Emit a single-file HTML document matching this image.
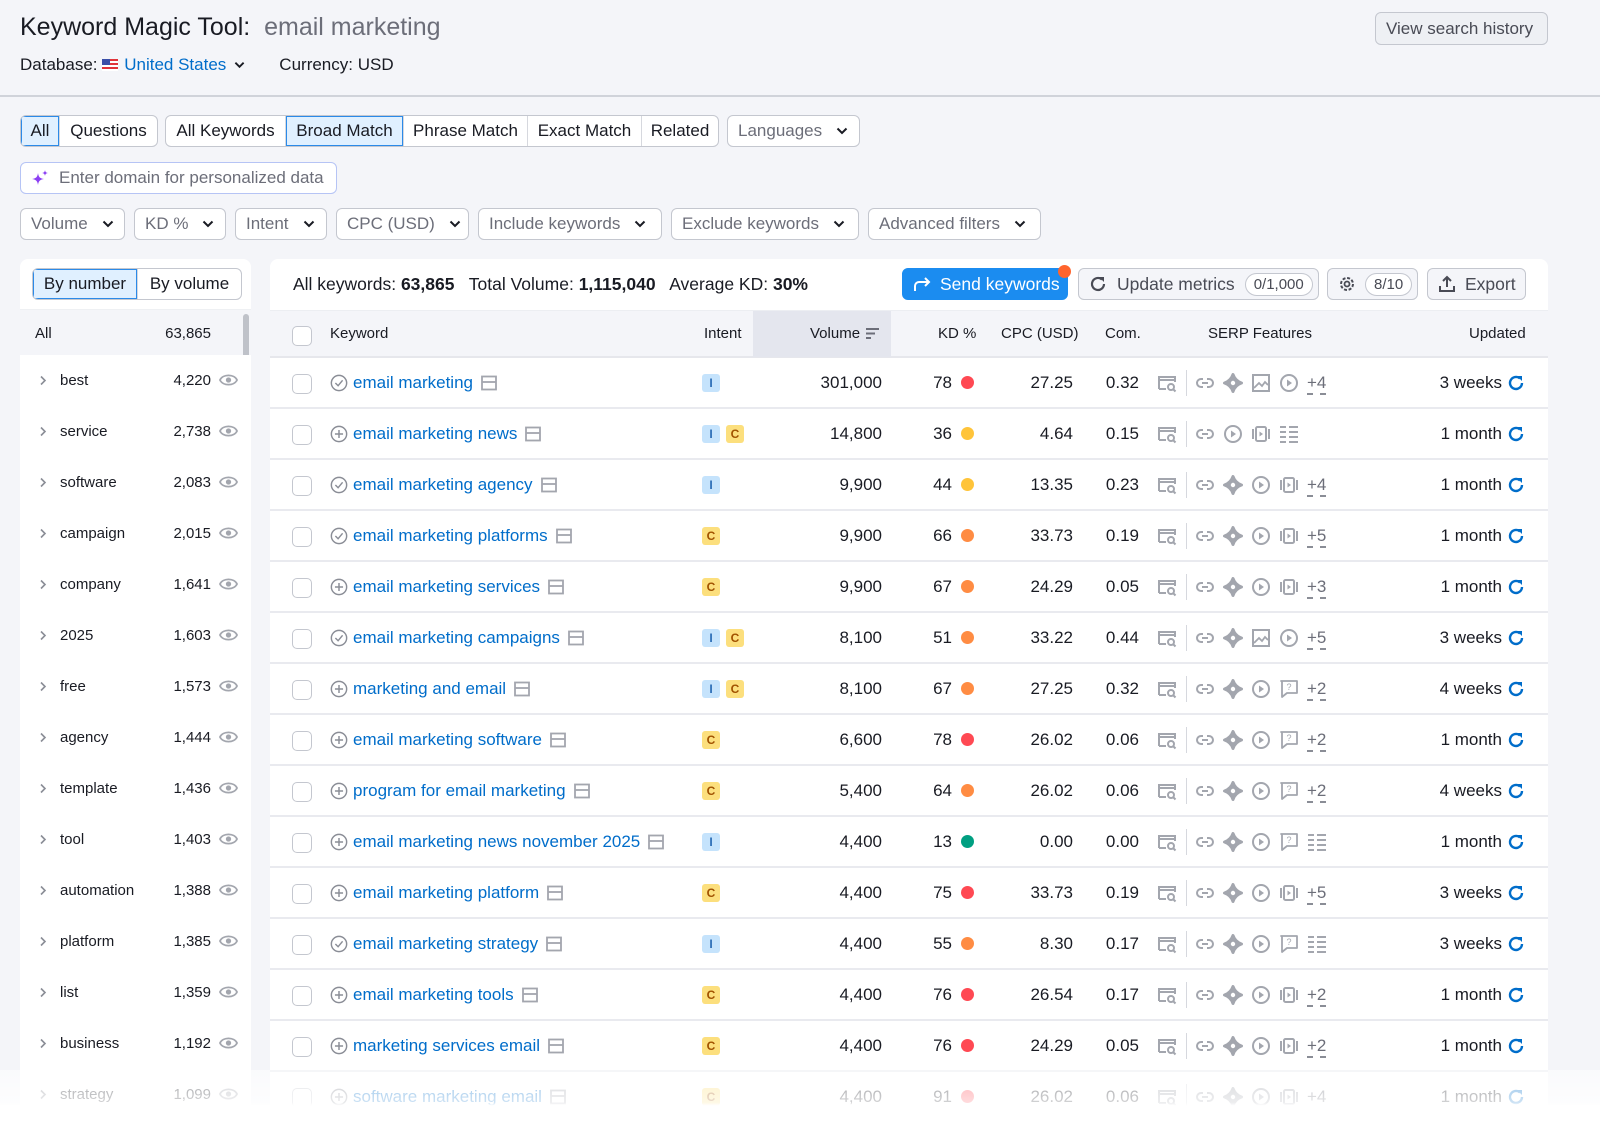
<!DOCTYPE html>
<html><head><meta charset="utf-8">
<style>
*{box-sizing:border-box;margin:0;padding:0}
body{width:1600px;height:1135px;overflow:hidden;background:#f4f5f9;font-family:"Liberation Sans",sans-serif;color:#191b23;position:relative}
.a{position:absolute}
.btn{position:absolute;height:32px;border:1px solid #c4c7cf;border-radius:6px;background:#fff;font-size:17px;display:flex;align-items:center;padding:0 10px;color:#191b23;white-space:nowrap}
.gray{color:#6c6e79}
.grp{position:absolute;height:32px;display:flex;border:1px solid #c4c7cf;border-radius:6px;background:#fff;overflow:hidden}
.grp div{display:flex;align-items:center;justify-content:center;font-size:17px;border-left:1px solid #d6d8de;white-space:nowrap}
.grp div:first-child{border-left:none}
.grp .sel{background:#e0f0ff;box-shadow:inset 0 0 0 1px #2b8ae8}
.chev{width:12px;height:8px;margin-left:10px}
svg{overflow:visible}
.r{position:absolute;left:270px;width:1278px;height:51px;border-bottom:2px solid #e9eaef;background:#fff;font-size:17px}
.r>*{position:absolute;top:0;height:49px;display:flex;align-items:center}
.cb{left:22px;top:16px!important;width:20px;height:20px!important;border:1px solid #c4c7cf;border-radius:5px;background:#fff}
.kw{left:60px;gap:5px;color:#006dca}
.kw svg{width:18px;height:18px}
.kw .pg{width:16px;height:16px;margin-left:3px}
.in{left:432px;gap:6px}
.bI,.bC{width:18px;height:18px;border-radius:3px;font-size:12px;font-weight:bold;display:flex;align-items:center;justify-content:center}
.bI{background:#c5e3fc;color:#2b6db5}
.bC{background:#fcdf7d;color:#a15200}
.vol{left:510px;width:102px;justify-content:flex-end}
.kd{left:630px;width:52px;justify-content:flex-end}
.dot{position:absolute;left:691px;top:18px!important;width:13px;height:13px!important;border-radius:50%}
.cpc{left:730px;width:73px;justify-content:flex-end}
.com{left:820px;width:49px;justify-content:flex-end}
.sv{position:absolute;width:20px;height:20px!important;top:15px!important}
.dv{position:absolute;left:916px;top:12px!important;width:1px;height:26px!important;background:#d6d8de}
.pl{left:1037px;color:#6c6e79;border-bottom:0}
.pl span{border-bottom:2px dashed #8a8d96;line-height:18px;padding-bottom:1px;margin-top:4px}
.up{left:1130px;width:102px;justify-content:flex-end}
.rf{position:absolute;left:1237px;top:16px!important;width:18px;height:18px!important}
.sl{position:absolute;left:20px;width:231px;height:51px;font-size:15px;background:#fff}
.sl>*{position:absolute;top:0;height:51px;display:flex;align-items:center}
.sl .c{left:18px;width:10px}
.sl .l{left:40px}
.sl .n{left:115px;width:76px;justify-content:flex-end}
.sl .e{left:199px;top:17px;width:19px;height:16px}
</style></head><body>
<svg style="display:none">
<symbol id="serp" viewBox="0 0 20 20"><path d="M2 16V4h16v5M2 7h16M2 16h7" fill="none" stroke="#a3a6ae" stroke-width="2"/><circle cx="14" cy="14" r="3" fill="none" stroke="#a3a6ae" stroke-width="2"/><path d="M16 16l2.5 2.5" stroke="#a3a6ae" stroke-width="2"/></symbol>
<symbol id="link" viewBox="0 0 20 20"><path d="M8 6H6a4 4 0 0 0 0 8h2M12 6h2a4 4 0 0 1 0 8h-2M7 10h6" fill="none" stroke="#a3a6ae" stroke-width="2"/></symbol>
<symbol id="star" viewBox="0 0 20 20"><path d="M10 1.5C11.5 6 14 8.5 18.5 10C14 11.5 11.5 14 10 18.5C8.5 14 6 11.5 1.5 10C6 8.5 8.5 6 10 1.5Z" fill="#a3a6ae" stroke="#a3a6ae" stroke-width="3" stroke-linejoin="round"/><circle cx="10" cy="10" r="2.2" fill="#fff"/></symbol>
<symbol id="img" viewBox="0 0 20 20"><rect x="2" y="2" width="16" height="16" fill="none" stroke="#a3a6ae" stroke-width="2"/><path d="M3 15l5-5 3 3 3-4 3 3M5 18h13" fill="none" stroke="#a3a6ae" stroke-width="1.8"/></symbol>
<symbol id="play" viewBox="0 0 20 20"><circle cx="10" cy="10" r="8" fill="none" stroke="#a3a6ae" stroke-width="2"/><path d="M8 6.5v7l5-3.5z" fill="#a3a6ae"/></symbol>
<symbol id="car" viewBox="0 0 20 20"><rect x="5" y="3" width="10" height="14" rx="1.5" fill="none" stroke="#a3a6ae" stroke-width="2"/><path d="M2 5v10M18 5v10" stroke="#a3a6ae" stroke-width="2"/><path d="M8.5 7.5v5l3.5-2.5z" fill="#a3a6ae"/></symbol>
<symbol id="faq" viewBox="0 0 20 20"><path d="M2 2h16v12H8l-5 4V2z" fill="none" stroke="#a3a6ae" stroke-width="1.8" stroke-linejoin="round"/><text x="10" y="11" font-size="9" text-anchor="middle" fill="#a3a6ae" font-family="Liberation Sans">?</text></symbol>
<symbol id="list" viewBox="0 0 20 20"><path d="M1 3h6M1 8h6M1 13h6M1 18h6M10 3h9M10 8h9M10 13h9M10 18h9" stroke="#a3a6ae" stroke-width="2"/></symbol>
<symbol id="chk" viewBox="0 0 20 20"><circle cx="10" cy="10" r="8.5" fill="none" stroke="#8a8d96" stroke-width="1.6"/><path d="M6 10l3 3 5-6" fill="none" stroke="#8a8d96" stroke-width="1.6"/></symbol>
<symbol id="plus" viewBox="0 0 20 20"><circle cx="10" cy="10" r="8.5" fill="none" stroke="#8a8d96" stroke-width="1.6"/><path d="M10 5.5v9M5.5 10h9" stroke="#8a8d96" stroke-width="1.6"/></symbol>
<symbol id="pg" viewBox="0 0 16 16"><rect x="1" y="1.5" width="14" height="13" fill="none" stroke="#a3a6ae" stroke-width="1.8"/><path d="M1 7h14" stroke="#a3a6ae" stroke-width="1.8"/></symbol>
<symbol id="rf" viewBox="0 0 18 18"><path d="M15 9a6 6 0 1 1-2-4.5" fill="none" stroke="#006dca" stroke-width="2.4"/><path d="M10 2h5v5z" fill="#006dca"/></symbol>
<symbol id="cv" viewBox="0 0 12 8"><path d="M1.5 1.5L6 6l4.5-4.5" fill="none" stroke="#191b23" stroke-width="2"/></symbol>
<symbol id="eye" viewBox="0 0 20 16"><path d="M1 8C4 1.5 16 1.5 19 8C16 14.5 4 14.5 1 8Z" fill="none" stroke="#a3a6ae" stroke-width="1.8"/><circle cx="10" cy="8" r="2.8" fill="#a3a6ae"/></symbol>
<symbol id="rc" viewBox="0 0 10 10"><path d="M3 1l4 4-4 4" fill="none" stroke="#8a8d96" stroke-width="1.6"/></symbol>
</svg>

<!-- header -->
<div class="a" style="left:20px;top:13px;font-size:25px;font-weight:500">Keyword Magic Tool:&nbsp; <span style="color:#6c6e79">email marketing</span></div>
<div class="a" style="left:20px;top:55px;font-size:17px;display:flex;align-items:center">Database:&nbsp;<span style="display:inline-block;width:16px;height:12px;margin:0 6px 0 0;background:repeating-linear-gradient(#e0343a 0 2px,#fff 2px 4px);position:relative"><span style="position:absolute;left:0;top:0;width:8px;height:6px;background:#3b4fa8"></span></span><span style="color:#006dca">United States</span><svg class="chev" style="width:11px;margin-left:8px"><use href="#cv" style="stroke:#006dca"/></svg><span style="margin-left:34px">Currency: USD</span></div>
<div class="btn" style="left:1375px;top:12px;height:33px;width:173px;background:#eef0f4;color:#494b55;font-size:17px">View search history</div>
<div class="a" style="left:0;top:95px;width:1600px;height:2px;background:#d0d3da"></div>

<div class="grp" style="left:20px;top:115px"><div class="sel" style="width:38px">All</div><div style="width:98px">Questions</div></div>
<div class="grp" style="left:165px;top:115px"><div style="width:119px">All Keywords</div><div class="sel" style="width:118px">Broad Match</div><div style="width:124px">Phrase Match</div><div style="width:114px">Exact Match</div><div style="width:77px">Related</div></div>
<div class="btn" style="left:727px;top:115px;width:133px"><span class="gray">Languages</span><svg class="chev" style="margin-left:14px"><use href="#cv"/></svg></div>
<div class="btn" style="left:20px;top:162px;width:317px;border-color:#b6c4f5;color:#6c6e79"><svg width="18" height="18" viewBox="0 0 18 18" style="margin-right:10px"><path d="M7 4C7.5 8 9 9.5 13 10C9 10.5 7.5 12 7 16C6.5 12 5 10.5 1 10C5 9.5 6.5 8 7 4Z" fill="#8c3ff3"/><path d="M14 1C14.3 3 15 3.7 17 4C15 4.3 14.3 5 14 7C13.7 5 13 4.3 11 4C13 3.7 13.7 3 14 1Z" fill="#8c3ff3"/></svg>Enter domain for personalized data</div>

<div class="btn" style="left:20px;top:208px;width:105px"><span class="gray">Volume</span><svg class="chev" style="margin-left:14px"><use href="#cv"/></svg></div>
<div class="btn" style="left:134px;top:208px;width:92px"><span class="gray">KD %</span><svg class="chev" style="margin-left:14px"><use href="#cv"/></svg></div>
<div class="btn" style="left:235px;top:208px;width:92px"><span class="gray">Intent</span><svg class="chev" style="margin-left:14px"><use href="#cv"/></svg></div>
<div class="btn" style="left:336px;top:208px;width:133px"><span class="gray">CPC (USD)</span><svg class="chev" style="margin-left:14px"><use href="#cv"/></svg></div>
<div class="btn" style="left:478px;top:208px;width:184px"><span class="gray">Include keywords</span><svg class="chev" style="margin-left:14px"><use href="#cv"/></svg></div>
<div class="btn" style="left:671px;top:208px;width:188px"><span class="gray">Exclude keywords</span><svg class="chev" style="margin-left:14px"><use href="#cv"/></svg></div>
<div class="btn" style="left:868px;top:208px;width:173px"><span class="gray">Advanced filters</span><svg class="chev" style="margin-left:14px"><use href="#cv"/></svg></div>

<!-- sidebar -->
<div class="a" style="left:20px;top:259px;width:231px;height:876px;background:#fff;border-radius:8px 8px 0 0"></div>
<div class="grp" style="left:32px;top:268px"><div class="sel" style="width:104px;font-size:17px">By number</div><div style="width:104px;font-size:17px">By volume</div></div>
<div class="a" style="left:20px;top:309px;width:231px;height:2px;background:#eef0f3"></div>
<div class="sl" style="top:310px;height:47px;background:#f4f5f9"><span class="l" style="left:15px;height:47px">All</span><span class="n" style="height:47px">63,865</span></div>
<div class="a" style="left:243px;top:314px;width:6px;height:420px;background:#bfc2c9;border-radius:3px"></div>
<div class="sl" style="top:355px"><svg class="c"><use href="#rc"/></svg><span class="l">best</span><span class="n">4,220</span><svg class="e"><use href="#eye"/></svg></div>
<div class="sl" style="top:406px"><svg class="c"><use href="#rc"/></svg><span class="l">service</span><span class="n">2,738</span><svg class="e"><use href="#eye"/></svg></div>
<div class="sl" style="top:457px"><svg class="c"><use href="#rc"/></svg><span class="l">software</span><span class="n">2,083</span><svg class="e"><use href="#eye"/></svg></div>
<div class="sl" style="top:508px"><svg class="c"><use href="#rc"/></svg><span class="l">campaign</span><span class="n">2,015</span><svg class="e"><use href="#eye"/></svg></div>
<div class="sl" style="top:559px"><svg class="c"><use href="#rc"/></svg><span class="l">company</span><span class="n">1,641</span><svg class="e"><use href="#eye"/></svg></div>
<div class="sl" style="top:610px"><svg class="c"><use href="#rc"/></svg><span class="l">2025</span><span class="n">1,603</span><svg class="e"><use href="#eye"/></svg></div>
<div class="sl" style="top:661px"><svg class="c"><use href="#rc"/></svg><span class="l">free</span><span class="n">1,573</span><svg class="e"><use href="#eye"/></svg></div>
<div class="sl" style="top:712px"><svg class="c"><use href="#rc"/></svg><span class="l">agency</span><span class="n">1,444</span><svg class="e"><use href="#eye"/></svg></div>
<div class="sl" style="top:763px"><svg class="c"><use href="#rc"/></svg><span class="l">template</span><span class="n">1,436</span><svg class="e"><use href="#eye"/></svg></div>
<div class="sl" style="top:814px"><svg class="c"><use href="#rc"/></svg><span class="l">tool</span><span class="n">1,403</span><svg class="e"><use href="#eye"/></svg></div>
<div class="sl" style="top:865px"><svg class="c"><use href="#rc"/></svg><span class="l">automation</span><span class="n">1,388</span><svg class="e"><use href="#eye"/></svg></div>
<div class="sl" style="top:916px"><svg class="c"><use href="#rc"/></svg><span class="l">platform</span><span class="n">1,385</span><svg class="e"><use href="#eye"/></svg></div>
<div class="sl" style="top:967px"><svg class="c"><use href="#rc"/></svg><span class="l">list</span><span class="n">1,359</span><svg class="e"><use href="#eye"/></svg></div>
<div class="sl" style="top:1018px"><svg class="c"><use href="#rc"/></svg><span class="l">business</span><span class="n">1,192</span><svg class="e"><use href="#eye"/></svg></div>
<div class="sl" style="top:1069px"><svg class="c"><use href="#rc"/></svg><span class="l">strategy</span><span class="n">1,099</span><svg class="e"><use href="#eye"/></svg></div>

<!-- table panel -->
<div class="a" style="left:270px;top:259px;width:1278px;height:876px;background:#fff;border-radius:8px 8px 0 0"></div>
<div class="a" style="left:293px;top:274px;font-size:17.5px;line-height:21px">All keywords: <b>63,865</b>&nbsp;&nbsp; Total Volume: <b>1,115,040</b>&nbsp;&nbsp; Average KD: <b>30%</b></div>
<div class="btn" style="left:902px;top:268px;width:166px;background:#1b8cf0;border-color:#1b8cf0;color:#fff;font-size:17.5px"><svg width="18" height="16" viewBox="0 0 18 16" style="margin-right:9px"><path d="M2 15V10a4 4 0 0 1 4-4h10M12 2l4 4-4 4" fill="none" stroke="#fff" stroke-width="2"/></svg>Send keywords</div>
<div class="a" style="left:1058px;top:265px;width:13px;height:13px;border-radius:50%;background:#ff642d"></div>
<div class="btn" style="left:1078px;top:268px;width:241px;background:#f4f5f9;color:#494b55;font-size:17.5px"><svg width="18" height="18" style="margin-right:10px"><path d="M15 9a6 6 0 1 1-2-4.5" fill="none" stroke="#494b55" stroke-width="2.2"/><path d="M10 2h5v5z" fill="#494b55"/></svg><span>Update metrics</span><span style="margin-left:10px;border:1px solid #c4c7cf;border-radius:12px;padding:2px 8px;font-size:15px;background:#fff">0/1,000</span></div>
<div class="btn" style="left:1327px;top:268px;width:91px;background:#f4f5f9;color:#494b55"><svg width="18" height="18" viewBox="0 0 18 18"><circle cx="9" cy="9" r="6" fill="none" stroke="#494b55" stroke-width="2" stroke-dasharray="3 1.7"/><circle cx="9" cy="9" r="2.5" fill="none" stroke="#494b55" stroke-width="1.8"/></svg><span style="margin-left:9px;border:1px solid #c4c7cf;border-radius:12px;padding:2px 8px;font-size:15px;background:#fff">8/10</span></div>
<div class="btn" style="left:1427px;top:268px;width:99px;background:#f4f5f9;color:#494b55;font-size:17.5px"><svg width="18" height="18" viewBox="0 0 18 18" style="margin-right:9px"><path d="M9 12V2M5 6l4-4 4 4M2 11v5h14v-5" fill="none" stroke="#494b55" stroke-width="2"/></svg>Export</div>

<div class="a" style="left:270px;top:310px;width:1278px;height:48px;background:#f4f5f9;border-bottom:2px solid #e6e7ec;border-top:1px solid #eceef2;font-size:15px">
<i class="a" style="left:22px;top:15px;width:20px;height:20px;border:1px solid #c4c7cf;border-radius:5px;background:#fff"></i>
<span class="a" style="left:60px;top:14px">Keyword</span>
<span class="a" style="left:434px;top:14px">Intent</span>
<div class="a" style="left:483px;top:0;width:138px;height:46px;background:#e4e6ee"></div>
<span class="a" style="left:540px;top:14px">Volume</span>
<svg class="a" style="left:596px;top:17px" width="13" height="11"><path d="M0 1h13M0 5.5h9M0 10h5" stroke="#6c6e79" stroke-width="2"/></svg>
<span class="a" style="left:668px;top:14px">KD %</span>
<span class="a" style="left:731px;top:14px">CPC (USD)</span>
<span class="a" style="left:835px;top:14px">Com.</span>
<span class="a" style="left:938px;top:14px">SERP Features</span>
<span class="a" style="left:1199px;top:14px">Updated</span>
</div>

<!-- rows -->
<div class="r" style="top:358px"><i class="cb"></i><span class="kw"><svg><use href="#chk"/></svg>email marketing<svg class="pg"><use href="#pg"/></svg></span><span class="in"><b class="bI">I</b></span><span class="vol">301,000</span><span class="kd">78</span><i class="dot" style="background:#ff4953"></i><span class="cpc">27.25</span><span class="com">0.32</span><svg class="sv" style="left:887px"><use href="#serp"/></svg><i class="dv"></i><svg class="sv" style="left:925px"><use href="#link"/></svg><svg class="sv" style="left:953px"><use href="#star"/></svg><svg class="sv" style="left:981px"><use href="#img"/></svg><svg class="sv" style="left:1009px"><use href="#play"/></svg><span class="pl"><span>+4</span></span><span class="up">3 weeks</span><svg class="rf"><use href="#rf"/></svg></div>

<div class="r" style="top:409px"><i class="cb"></i><span class="kw"><svg><use href="#plus"/></svg>email marketing news<svg class="pg"><use href="#pg"/></svg></span><span class="in"><b class="bI">I</b><b class="bC">C</b></span><span class="vol">14,800</span><span class="kd">36</span><i class="dot" style="background:#ffc43a"></i><span class="cpc">4.64</span><span class="com">0.15</span><svg class="sv" style="left:887px"><use href="#serp"/></svg><i class="dv"></i><svg class="sv" style="left:925px"><use href="#link"/></svg><svg class="sv" style="left:953px"><use href="#play"/></svg><svg class="sv" style="left:981px"><use href="#car"/></svg><svg class="sv" style="left:1009px"><use href="#list"/></svg><span class="up">1 month</span><svg class="rf"><use href="#rf"/></svg></div>

<div class="r" style="top:460px"><i class="cb"></i><span class="kw"><svg><use href="#chk"/></svg>email marketing agency<svg class="pg"><use href="#pg"/></svg></span><span class="in"><b class="bI">I</b></span><span class="vol">9,900</span><span class="kd">44</span><i class="dot" style="background:#ffc43a"></i><span class="cpc">13.35</span><span class="com">0.23</span><svg class="sv" style="left:887px"><use href="#serp"/></svg><i class="dv"></i><svg class="sv" style="left:925px"><use href="#link"/></svg><svg class="sv" style="left:953px"><use href="#star"/></svg><svg class="sv" style="left:981px"><use href="#play"/></svg><svg class="sv" style="left:1009px"><use href="#car"/></svg><span class="pl"><span>+4</span></span><span class="up">1 month</span><svg class="rf"><use href="#rf"/></svg></div>

<div class="r" style="top:511px"><i class="cb"></i><span class="kw"><svg><use href="#chk"/></svg>email marketing platforms<svg class="pg"><use href="#pg"/></svg></span><span class="in"><b class="bC">C</b></span><span class="vol">9,900</span><span class="kd">66</span><i class="dot" style="background:#ff8c43"></i><span class="cpc">33.73</span><span class="com">0.19</span><svg class="sv" style="left:887px"><use href="#serp"/></svg><i class="dv"></i><svg class="sv" style="left:925px"><use href="#link"/></svg><svg class="sv" style="left:953px"><use href="#star"/></svg><svg class="sv" style="left:981px"><use href="#play"/></svg><svg class="sv" style="left:1009px"><use href="#car"/></svg><span class="pl"><span>+5</span></span><span class="up">1 month</span><svg class="rf"><use href="#rf"/></svg></div>

<div class="r" style="top:562px"><i class="cb"></i><span class="kw"><svg><use href="#plus"/></svg>email marketing services<svg class="pg"><use href="#pg"/></svg></span><span class="in"><b class="bC">C</b></span><span class="vol">9,900</span><span class="kd">67</span><i class="dot" style="background:#ff8c43"></i><span class="cpc">24.29</span><span class="com">0.05</span><svg class="sv" style="left:887px"><use href="#serp"/></svg><i class="dv"></i><svg class="sv" style="left:925px"><use href="#link"/></svg><svg class="sv" style="left:953px"><use href="#star"/></svg><svg class="sv" style="left:981px"><use href="#play"/></svg><svg class="sv" style="left:1009px"><use href="#car"/></svg><span class="pl"><span>+3</span></span><span class="up">1 month</span><svg class="rf"><use href="#rf"/></svg></div>

<div class="r" style="top:613px"><i class="cb"></i><span class="kw"><svg><use href="#chk"/></svg>email marketing campaigns<svg class="pg"><use href="#pg"/></svg></span><span class="in"><b class="bI">I</b><b class="bC">C</b></span><span class="vol">8,100</span><span class="kd">51</span><i class="dot" style="background:#ff8c43"></i><span class="cpc">33.22</span><span class="com">0.44</span><svg class="sv" style="left:887px"><use href="#serp"/></svg><i class="dv"></i><svg class="sv" style="left:925px"><use href="#link"/></svg><svg class="sv" style="left:953px"><use href="#star"/></svg><svg class="sv" style="left:981px"><use href="#img"/></svg><svg class="sv" style="left:1009px"><use href="#play"/></svg><span class="pl"><span>+5</span></span><span class="up">3 weeks</span><svg class="rf"><use href="#rf"/></svg></div>

<div class="r" style="top:664px"><i class="cb"></i><span class="kw"><svg><use href="#plus"/></svg>marketing and email<svg class="pg"><use href="#pg"/></svg></span><span class="in"><b class="bI">I</b><b class="bC">C</b></span><span class="vol">8,100</span><span class="kd">67</span><i class="dot" style="background:#ff8c43"></i><span class="cpc">27.25</span><span class="com">0.32</span><svg class="sv" style="left:887px"><use href="#serp"/></svg><i class="dv"></i><svg class="sv" style="left:925px"><use href="#link"/></svg><svg class="sv" style="left:953px"><use href="#star"/></svg><svg class="sv" style="left:981px"><use href="#play"/></svg><svg class="sv" style="left:1009px"><use href="#faq"/></svg><span class="pl"><span>+2</span></span><span class="up">4 weeks</span><svg class="rf"><use href="#rf"/></svg></div>

<div class="r" style="top:715px"><i class="cb"></i><span class="kw"><svg><use href="#plus"/></svg>email marketing software<svg class="pg"><use href="#pg"/></svg></span><span class="in"><b class="bC">C</b></span><span class="vol">6,600</span><span class="kd">78</span><i class="dot" style="background:#ff4953"></i><span class="cpc">26.02</span><span class="com">0.06</span><svg class="sv" style="left:887px"><use href="#serp"/></svg><i class="dv"></i><svg class="sv" style="left:925px"><use href="#link"/></svg><svg class="sv" style="left:953px"><use href="#star"/></svg><svg class="sv" style="left:981px"><use href="#play"/></svg><svg class="sv" style="left:1009px"><use href="#faq"/></svg><span class="pl"><span>+2</span></span><span class="up">1 month</span><svg class="rf"><use href="#rf"/></svg></div>

<div class="r" style="top:766px"><i class="cb"></i><span class="kw"><svg><use href="#plus"/></svg>program for email marketing<svg class="pg"><use href="#pg"/></svg></span><span class="in"><b class="bC">C</b></span><span class="vol">5,400</span><span class="kd">64</span><i class="dot" style="background:#ff8c43"></i><span class="cpc">26.02</span><span class="com">0.06</span><svg class="sv" style="left:887px"><use href="#serp"/></svg><i class="dv"></i><svg class="sv" style="left:925px"><use href="#link"/></svg><svg class="sv" style="left:953px"><use href="#star"/></svg><svg class="sv" style="left:981px"><use href="#play"/></svg><svg class="sv" style="left:1009px"><use href="#faq"/></svg><span class="pl"><span>+2</span></span><span class="up">4 weeks</span><svg class="rf"><use href="#rf"/></svg></div>

<div class="r" style="top:817px"><i class="cb"></i><span class="kw"><svg><use href="#plus"/></svg>email marketing news november 2025<svg class="pg"><use href="#pg"/></svg></span><span class="in"><b class="bI">I</b></span><span class="vol">4,400</span><span class="kd">13</span><i class="dot" style="background:#009f81"></i><span class="cpc">0.00</span><span class="com">0.00</span><svg class="sv" style="left:887px"><use href="#serp"/></svg><i class="dv"></i><svg class="sv" style="left:925px"><use href="#link"/></svg><svg class="sv" style="left:953px"><use href="#star"/></svg><svg class="sv" style="left:981px"><use href="#play"/></svg><svg class="sv" style="left:1009px"><use href="#faq"/></svg><svg class="sv" style="left:1037px"><use href="#list"/></svg><span class="up">1 month</span><svg class="rf"><use href="#rf"/></svg></div>

<div class="r" style="top:868px"><i class="cb"></i><span class="kw"><svg><use href="#plus"/></svg>email marketing platform<svg class="pg"><use href="#pg"/></svg></span><span class="in"><b class="bC">C</b></span><span class="vol">4,400</span><span class="kd">75</span><i class="dot" style="background:#ff4953"></i><span class="cpc">33.73</span><span class="com">0.19</span><svg class="sv" style="left:887px"><use href="#serp"/></svg><i class="dv"></i><svg class="sv" style="left:925px"><use href="#link"/></svg><svg class="sv" style="left:953px"><use href="#star"/></svg><svg class="sv" style="left:981px"><use href="#play"/></svg><svg class="sv" style="left:1009px"><use href="#car"/></svg><span class="pl"><span>+5</span></span><span class="up">3 weeks</span><svg class="rf"><use href="#rf"/></svg></div>

<div class="r" style="top:919px"><i class="cb"></i><span class="kw"><svg><use href="#chk"/></svg>email marketing strategy<svg class="pg"><use href="#pg"/></svg></span><span class="in"><b class="bI">I</b></span><span class="vol">4,400</span><span class="kd">55</span><i class="dot" style="background:#ff8c43"></i><span class="cpc">8.30</span><span class="com">0.17</span><svg class="sv" style="left:887px"><use href="#serp"/></svg><i class="dv"></i><svg class="sv" style="left:925px"><use href="#link"/></svg><svg class="sv" style="left:953px"><use href="#star"/></svg><svg class="sv" style="left:981px"><use href="#play"/></svg><svg class="sv" style="left:1009px"><use href="#faq"/></svg><svg class="sv" style="left:1037px"><use href="#list"/></svg><span class="up">3 weeks</span><svg class="rf"><use href="#rf"/></svg></div>

<div class="r" style="top:970px"><i class="cb"></i><span class="kw"><svg><use href="#plus"/></svg>email marketing tools<svg class="pg"><use href="#pg"/></svg></span><span class="in"><b class="bC">C</b></span><span class="vol">4,400</span><span class="kd">76</span><i class="dot" style="background:#ff4953"></i><span class="cpc">26.54</span><span class="com">0.17</span><svg class="sv" style="left:887px"><use href="#serp"/></svg><i class="dv"></i><svg class="sv" style="left:925px"><use href="#link"/></svg><svg class="sv" style="left:953px"><use href="#star"/></svg><svg class="sv" style="left:981px"><use href="#play"/></svg><svg class="sv" style="left:1009px"><use href="#car"/></svg><span class="pl"><span>+2</span></span><span class="up">1 month</span><svg class="rf"><use href="#rf"/></svg></div>

<div class="r" style="top:1021px"><i class="cb"></i><span class="kw"><svg><use href="#plus"/></svg>marketing services email<svg class="pg"><use href="#pg"/></svg></span><span class="in"><b class="bC">C</b></span><span class="vol">4,400</span><span class="kd">76</span><i class="dot" style="background:#ff4953"></i><span class="cpc">24.29</span><span class="com">0.05</span><svg class="sv" style="left:887px"><use href="#serp"/></svg><i class="dv"></i><svg class="sv" style="left:925px"><use href="#link"/></svg><svg class="sv" style="left:953px"><use href="#star"/></svg><svg class="sv" style="left:981px"><use href="#play"/></svg><svg class="sv" style="left:1009px"><use href="#car"/></svg><span class="pl"><span>+2</span></span><span class="up">1 month</span><svg class="rf"><use href="#rf"/></svg></div>

<div class="r" style="top:1072px"><i class="cb"></i><span class="kw"><svg><use href="#plus"/></svg>software marketing email<svg class="pg"><use href="#pg"/></svg></span><span class="in"><b class="bC">C</b></span><span class="vol">4,400</span><span class="kd">91</span><i class="dot" style="background:#ff4953"></i><span class="cpc">26.02</span><span class="com">0.06</span><svg class="sv" style="left:887px"><use href="#serp"/></svg><i class="dv"></i><svg class="sv" style="left:925px"><use href="#link"/></svg><svg class="sv" style="left:953px"><use href="#star"/></svg><svg class="sv" style="left:981px"><use href="#play"/></svg><svg class="sv" style="left:1009px"><use href="#car"/></svg><span class="pl"><span>+4</span></span><span class="up">1 month</span><svg class="rf"><use href="#rf"/></svg></div>

<!-- fade -->
<div class="a" style="left:0;top:1070px;width:1600px;height:65px;background:linear-gradient(rgba(255,255,255,0.55),rgba(255,255,255,0.8) 50%,#fff 55%)"></div>
</body></html>
